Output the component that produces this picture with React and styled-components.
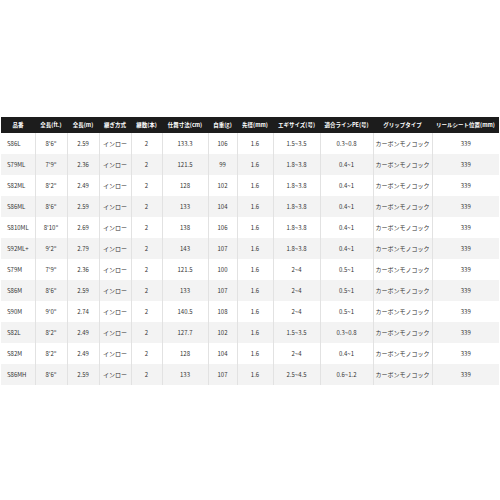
import React from 'react'
import styled, { createGlobalStyle } from 'styled-components'

const GlobalStyle = createGlobalStyle`
body {
  margin: 0;
  background: #fff;
  font-family: "Noto Sans CJK JP", "Noto Sans", sans-serif;
}
`;

const Page = styled.div`
width: 500px;
height: 500px;
padding-top: 117px;
padding-left: 1px;
box-sizing: border-box;
`;

const Table = styled.table`
width: 498px;
border-collapse: collapse;
table-layout: fixed;
`;

const HeadCell = styled.th`
background: #1c1c1c;
color: #fff;
font-size: 5.5px;
font-weight: bold;
height: 16px;
padding: 0;
text-align: center;
white-space: nowrap;
overflow: hidden;
`;

const Row = styled.tr`
background: ${p => (p.$odd ? '#f3f3f3' : '#ffffff')};
`;

const Cell = styled.td`
height: 21px;
padding: 0;
font-size: 6px;
color: #333;
text-align: ${p => (p.$left ? 'left' : 'center')};
padding-left: ${p => (p.$left ? '6px' : '0')};
white-space: nowrap;
overflow: hidden;
border-left: 1px solid #e2e2e2;
&:first-child {
  border-left: none;
}
`;

const widths = [34, 32, 32, 32, 31, 46, 29, 36, 47, 53, 59, 67];

const headers = [
  '品番', '全長(ft.)', '全長(m)', '継ぎ方式', '継数(本)', '仕舞寸法(cm)',
  '自重(g)', '先径(mm)', 'エギサイズ(号)', '適合ラインPE(号)', 'グリップタイプ', 'リールシート位置(mm)',
];

const grip = 'カーボンモノコック';

const rows = [
  ['S86L', '8\'6"', '2.59', '133.3', '106', '1.5~3.5', '0.3~0.8'],
  ['S79ML', '7\'9"', '2.36', '121.5', '99', '1.8~3.8', '0.4~1'],
  ['S82ML', '8\'2"', '2.49', '128', '102', '1.8~3.8', '0.4~1'],
  ['S86ML', '8\'6"', '2.59', '133', '104', '1.8~3.8', '0.4~1'],
  ['S810ML', '8\'10"', '2.69', '138', '106', '1.8~3.8', '0.4~1'],
  ['S92ML+', '9\'2"', '2.79', '143', '107', '1.8~3.8', '0.4~1'],
  ['S79M', '7\'9"', '2.36', '121.5', '100', '2~4', '0.5~1'],
  ['S86M', '8\'6"', '2.59', '133', '107', '2~4', '0.5~1'],
  ['S90M', '9\'0"', '2.74', '140.5', '108', '2~4', '0.5~1'],
  ['S82L', '8\'2"', '2.49', '127.7', '102', '1.5~3.5', '0.3~0.8'],
  ['S82M', '8\'2"', '2.49', '128', '104', '2~4', '0.4~1'],
  ['S86MH', '8\'6"', '2.59', '133', '107', '2.5~4.5', '0.6~1.2'],
];

export default function App() {
  return (
    <Page>
      <GlobalStyle />
      <Table>
        <colgroup>
          {widths.map((w, i) => <col key={i} style={{ width: w }} />)}
        </colgroup>
        <thead>
          <tr>
            {headers.map(h => <HeadCell key={h}>{h}</HeadCell>)}
          </tr>
        </thead>
        <tbody>
          {rows.map(([name, ft, m, cm, g, egi, pe], i) => (
            <Row key={name} $odd={i % 2 === 1}>
              <Cell $left>{name}</Cell>
              <Cell>{ft}</Cell>
              <Cell>{m}</Cell>
              <Cell>インロー</Cell>
              <Cell>2</Cell>
              <Cell>{cm}</Cell>
              <Cell>{g}</Cell>
              <Cell>1.6</Cell>
              <Cell>{egi}</Cell>
              <Cell>{pe}</Cell>
              <Cell>{grip}</Cell>
              <Cell>339</Cell>
            </Row>
          ))}
        </tbody>
      </Table>
    </Page>
  )
}
